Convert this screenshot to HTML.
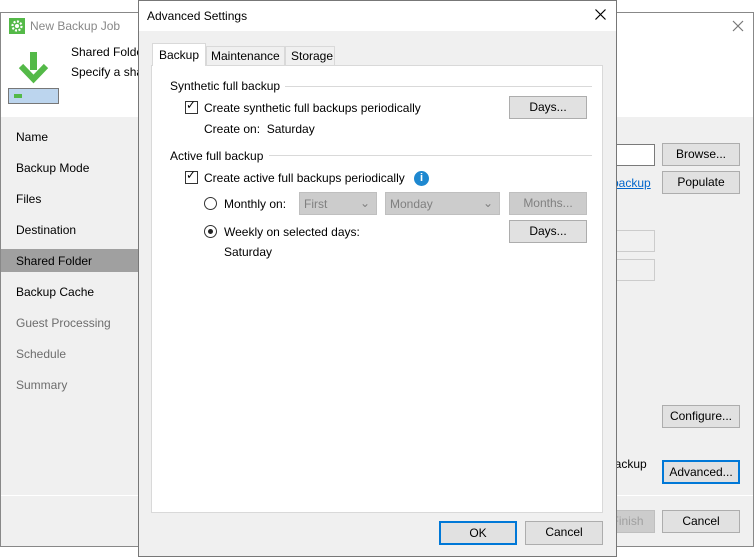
<!DOCTYPE html>
<html><head><style>
*{box-sizing:border-box;margin:0;padding:0}
body{width:754px;height:558px;background:#fff;font-family:"Liberation Sans",sans-serif;font-size:12px;color:#000;position:relative;overflow:hidden}
.a{position:absolute;white-space:nowrap}
.btn{position:absolute;background:#e1e1e1;border:1px solid #adadad;text-align:center;line-height:20px;font-size:12px}
.cb{position:absolute;width:13px;height:13px;border:1px solid #333;background:#fff}
.rb{position:absolute;width:13px;height:13px;border:1px solid #333;border-radius:50%;background:#fff}
</style></head><body>
<div class="a" style="left:0;top:12px;width:754px;height:535px;border:1px solid #888;background:#f0f0f0"></div>
<div class="a" style="left:1px;top:13px;width:752px;height:104px;background:#fff"></div>
<svg class="a" style="left:9px;top:18px" width="16" height="16"><rect width="16" height="16" fill="#54b948"/><circle cx="8" cy="8" r="4.5" fill="none" stroke="#fff" stroke-width="2.2" stroke-dasharray="2 1.5"/><circle cx="8" cy="8" r="2" fill="#fff"/></svg>
<div class="a" style="left:30px;top:19px;color:#888;font-size:12px">New Backup Job</div>
<svg class="a" style="left:732px;top:20px" width="12" height="12"><path d="M1 1L11 11M11 1L1 11" stroke="#777" stroke-width="1.2"/></svg>
<svg class="a" style="left:17px;top:52px" width="32" height="32"><rect x="13" y="0" width="7" height="18" fill="#54b948"/><path d="M4 14L16.5 27L29 14" fill="none" stroke="#54b948" stroke-width="6"/></svg>
<div class="a" style="left:8px;top:88px;width:51px;height:16px;background:#bcd5ee;border:1px solid #777"></div>
<div class="a" style="left:14px;top:94px;width:8px;height:4px;background:#54b948"></div>
<div class="a" style="left:71px;top:45px">Shared Folder</div>
<div class="a" style="left:71px;top:65px">Specify a shared</div>
<div class="a" style="left:1px;top:249px;width:137px;height:23px;background:#a0a0a0"></div>
<div class="a" style="left:16px;top:130px">Name</div>
<div class="a" style="left:16px;top:161px">Backup Mode</div>
<div class="a" style="left:16px;top:192px">Files</div>
<div class="a" style="left:16px;top:223px">Destination</div>
<div class="a" style="left:16px;top:254px">Shared Folder</div>
<div class="a" style="left:16px;top:285px">Backup Cache</div>
<div class="a" style="left:16px;top:316px;color:#6d6d6d">Guest Processing</div>
<div class="a" style="left:16px;top:347px;color:#6d6d6d">Schedule</div>
<div class="a" style="left:16px;top:378px;color:#6d6d6d">Summary</div>
<div class="a" style="left:1px;top:495px;width:752px;height:1px;background:#fff"></div>
<div class="a" style="left:600px;top:144px;width:55px;height:22px;background:#fff;border:1px solid #7a7a7a"></div>
<div class="btn" style="left:662px;top:143px;width:78px;height:23px">Browse...</div>
<div class="a" style="left:612px;top:176px;color:#0066cc;text-decoration:underline">backup</div>
<div class="btn" style="left:662px;top:171px;width:78px;height:23px">Populate</div>
<div class="a" style="left:600px;top:230px;width:55px;height:22px;border:1px solid #ccc;background:#f0f0f0"></div>
<div class="a" style="left:600px;top:259px;width:55px;height:22px;border:1px solid #ccc;background:#f0f0f0"></div>
<div class="btn" style="left:662px;top:405px;width:78px;height:23px">Configure...</div>
<div class="a" style="left:608px;top:457px">backup</div>
<div class="btn" style="left:662px;top:460px;width:78px;height:24px;border:2px solid #0078d7;line-height:20px">Advanced...</div>
<div class="btn" style="left:600px;top:510px;width:55px;height:23px;background:#ccc;border-color:#bfbfbf;color:#a0a0a0">Finish</div>
<div class="btn" style="left:662px;top:510px;width:78px;height:23px">Cancel</div>
<div class="a" style="left:138px;top:0;width:479px;height:557px;background:#f0f0f0;border:1px solid #777"></div>
<div class="a" style="left:139px;top:1px;width:477px;height:30px;background:#fff"></div>
<div class="a" style="left:147px;top:9px">Advanced Settings</div>
<svg class="a" style="left:595px;top:9px" width="11" height="11"><path d="M0.5 0.5L10.5 10.5M10.5 0.5L0.5 10.5" stroke="#000" stroke-width="1.2"/></svg>
<div class="a" style="left:151px;top:65px;width:452px;height:448px;background:#fff;border:1px solid #d9d9d9"></div>
<div class="a" style="left:152px;top:43px;width:54px;height:23px;background:#fff;border:1px solid #d9d9d9;border-bottom:none;padding:4px 0 0 6px">Backup</div>
<div class="a" style="left:206px;top:46px;width:79px;height:20px;background:#f0f0f0;border:1px solid #d9d9d9;padding:2px 0 0 4px">Maintenance</div>
<div class="a" style="left:285px;top:46px;width:50px;height:20px;background:#f0f0f0;border:1px solid #d9d9d9;padding:2px 0 0 5px">Storage</div>
<div class="a" style="left:170px;top:79px">Synthetic full backup</div>
<div class="a" style="left:285px;top:86px;width:307px;height:1px;background:#d9d9d9"></div>
<div class="cb" style="left:185px;top:101px"></div>
<div class="a" style="left:186px;top:98px;font-size:12px">✓</div>
<div class="a" style="left:204px;top:101px">Create synthetic full backups periodically</div>
<div class="a" style="left:204px;top:122px">Create on:&nbsp; Saturday</div>
<div class="btn" style="left:509px;top:96px;width:78px;height:23px">Days...</div>
<div class="a" style="left:170px;top:149px">Active full backup</div>
<div class="a" style="left:269px;top:155px;width:323px;height:1px;background:#d9d9d9"></div>
<div class="cb" style="left:185px;top:171px"></div>
<div class="a" style="left:186px;top:168px">✓</div>
<div class="a" style="left:204px;top:171px">Create active full backups periodically</div>
<div class="a" style="left:414px;top:171px;width:15px;height:15px;border-radius:50%;background:#1e88d0;color:#fff;font-weight:bold;font-size:11px;text-align:center;line-height:15px">i</div>
<div class="rb" style="left:204px;top:197px"></div>
<div class="a" style="left:224px;top:197px">Monthly on:</div>
<div class="a" style="left:299px;top:192px;width:78px;height:23px;background:#ccc;border:1px solid #bfbfbf;color:#808080;padding:4px 0 0 4px">First<span style="position:absolute;right:6px;top:3px">⌄</span></div>
<div class="a" style="left:385px;top:192px;width:115px;height:23px;background:#ccc;border:1px solid #bfbfbf;color:#808080;padding:4px 0 0 4px">Monday<span style="position:absolute;right:6px;top:3px">⌄</span></div>
<div class="btn" style="left:509px;top:192px;width:78px;height:23px;background:#ccc;border-color:#bfbfbf;color:#808080">Months...</div>
<div class="rb" style="left:204px;top:225px"></div>
<div class="a" style="left:208px;top:229px;width:5px;height:5px;border-radius:50%;background:#222"></div>
<div class="a" style="left:224px;top:225px">Weekly on selected days:</div>
<div class="btn" style="left:509px;top:220px;width:78px;height:23px">Days...</div>
<div class="a" style="left:224px;top:245px">Saturday</div>
<div class="btn" style="left:439px;top:521px;width:78px;height:24px;border:2px solid #0078d7">OK</div>
<div class="btn" style="left:525px;top:521px;width:78px;height:24px">Cancel</div>
</body></html>
